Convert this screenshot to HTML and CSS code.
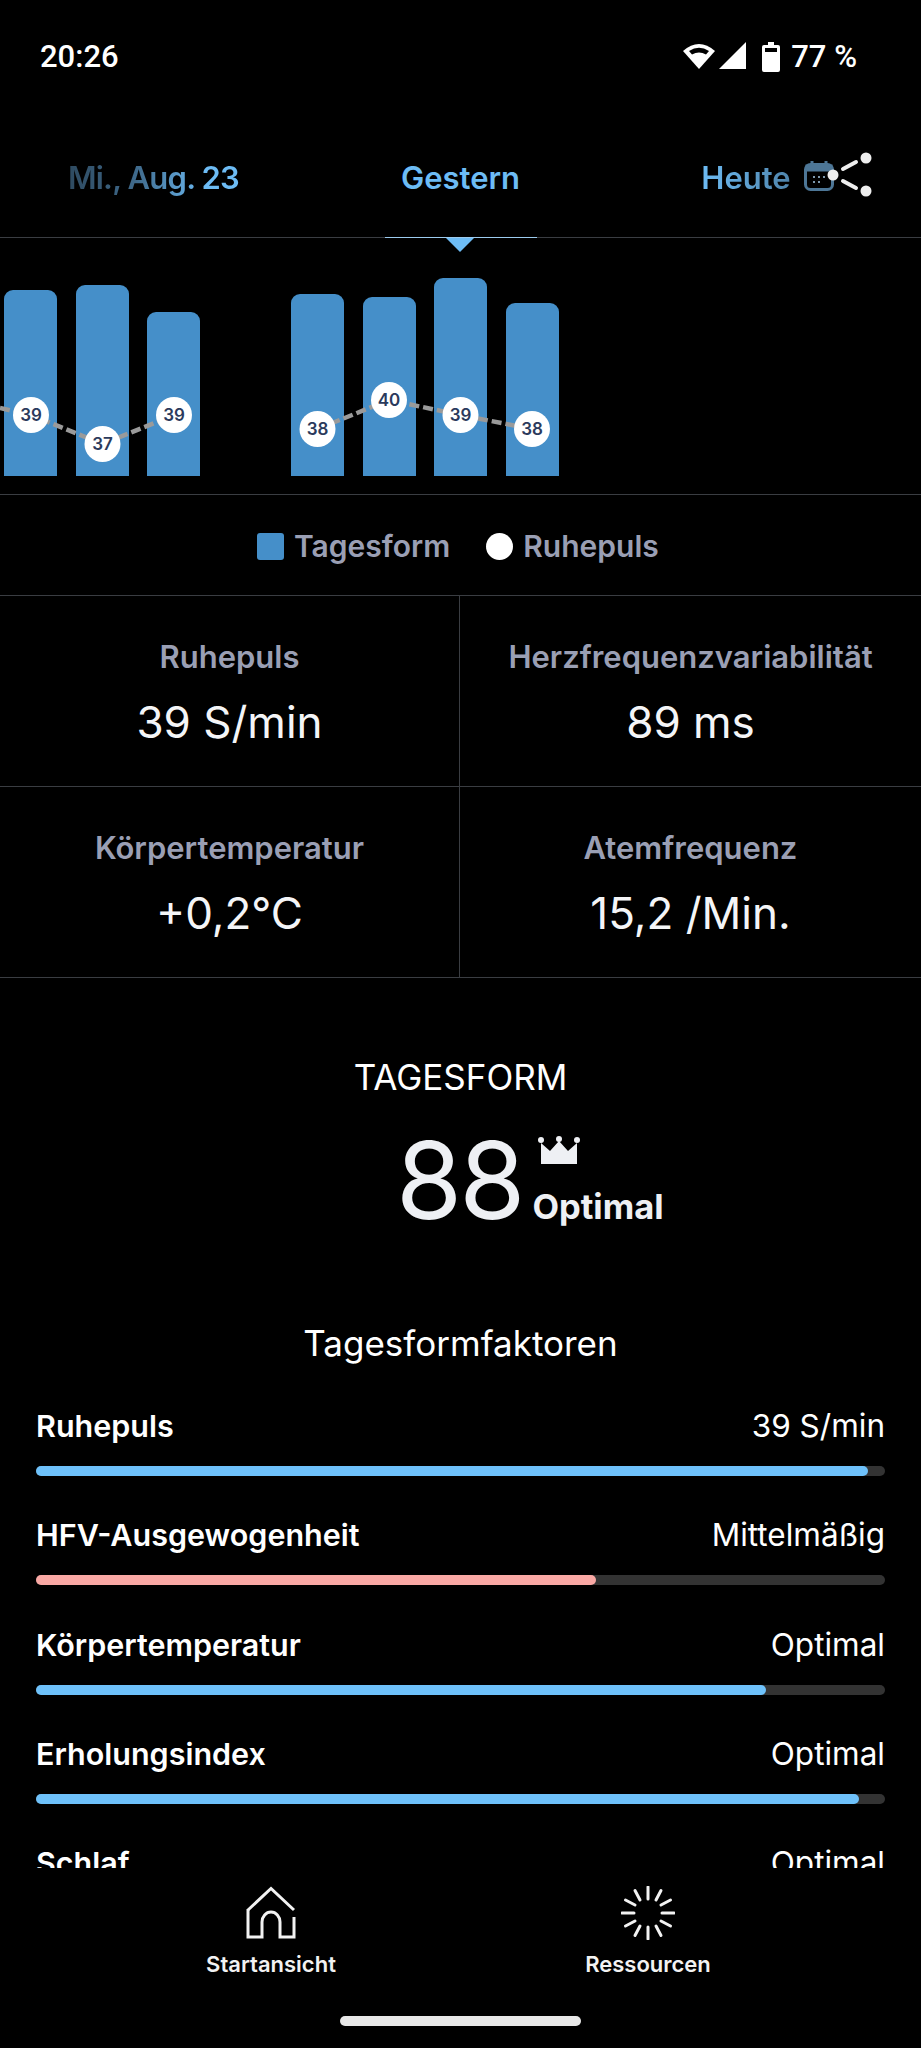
FILE: index.html
```html
<!DOCTYPE html>
<html lang="de">
<head>
    <meta charset="UTF-8">
    <title>Tagesform</title>
    <link rel="stylesheet" href="styles.css">
</head>
<body>
<div id="app">
    <div class="status">
        <span class="status_time">20:26</span>
        <div class="status_right">
            <svg class="ic_wifi" width="34" height="28" viewBox="0 0 34 28">
                <path d="M17 27 L1 9 Q17 -5 33 9 Z" fill="#fff"/>
                <path d="M7 9 Q17 2.500 27 9 L24 12.500 Q17 8.500 10 12.500 Z" fill="#000"/>
            </svg>
            <svg class="ic_signal" width="27" height="28" viewBox="0 0 27 28">
                <path d="M27 0 V27 H0 Z" fill="#fff"/>
            </svg>
            <svg class="ic_batt" width="18" height="30" viewBox="0 0 18 30">
                <path d="M6 0 H12 V3 H16 Q18 3 18 5 V28 Q18 30 16 30 H2 Q0 30 0 28 V5 Q0 3 2 3 H6 Z" fill="#fff"/>
                <rect x="3" y="6" width="12" height="4" fill="#000"/>
            </svg>
            <span class="status_pct">77 %</span>
        </div>
    </div>

    <div class="tabs">
        <div class="tab tab_past"><span class="fade_left">Mi., Aug. 23</span></div>
        <div class="tab">Gestern</div>
        <div class="tab tab_today">
            <span class="fade_right">Heute</span>
            <svg width="30" height="30" viewBox="0 0 30 30">
                <path d="M8 0 V4 M22 0 V4" stroke="#4d7696" stroke-width="3"/>
                <rect x="1.500" y="3.500" width="27" height="25" rx="5" fill="none" stroke="#4d7696" stroke-width="3"/>
                <rect x="1.500" y="3.500" width="27" height="7" fill="#4d7696"/>
                <path d="M9 16 H11 M14 16 H16 M19 16 H21 M9 21 H11 M14 21 H16" stroke="#7d98ad" stroke-width="2"/>
            </svg>
        </div>
        <svg class="share" width="46" height="46" viewBox="0 0 46 46">
            <circle cx="6" cy="23" r="5.500" fill="#eee"/>
            <circle cx="39" cy="6" r="5.500" fill="#eee"/>
            <circle cx="39" cy="39" r="5.500" fill="#eee"/>
            <path d="M16 17 L29 10 M16 29 L29 36" stroke="#eee" stroke-width="4" stroke-linecap="round"/>
        </svg>
        <span class="tab_line"></span>
        <span class="tab_arrow"></span>
    </div>

    <div class="chart">
        <div class="bars">
            <div class="bar" style="height: 186px"></div>
            <div class="bar" style="height: 191px"></div>
            <div class="bar" style="height: 164px"></div>
            <div class="bar bar_gap" style="height: 182px"></div>
            <div class="bar" style="height: 179px"></div>
            <div class="bar" style="height: 198px"></div>
            <div class="bar" style="height: 173px"></div>
        </div>
        <svg class="pulse" width="921" height="256" viewBox="0 0 921 256">
            <path class="pulse_line" d="M0 170 L31 177 L102.500 206 L174 177"/>
            <path class="pulse_line" d="M317.500 191 L389 162 L460.500 177 L532 191"/>
            <g class="pulse_dot"><circle cx="31" cy="177" r="18"/><text x="31" y="183">39</text></g>
            <g class="pulse_dot"><circle cx="102.500" cy="206" r="18"/><text x="102.500" y="212">37</text></g>
            <g class="pulse_dot"><circle cx="174" cy="177" r="18"/><text x="174" y="183">39</text></g>
            <g class="pulse_dot"><circle cx="317.500" cy="191" r="18"/><text x="317.500" y="197">38</text></g>
            <g class="pulse_dot"><circle cx="389" cy="162" r="18"/><text x="389" y="168">40</text></g>
            <g class="pulse_dot"><circle cx="460.500" cy="177" r="18"/><text x="460.500" y="183">39</text></g>
            <g class="pulse_dot"><circle cx="532" cy="191" r="18"/><text x="532" y="197">38</text></g>
        </svg>
    </div>

    <div class="legend">
        <span class="legend_sq"></span><span class="legend_txt">Tagesform</span>
        <span class="legend_dot"></span><span class="legend_txt">Ruhepuls</span>
    </div>

    <div class="stats">
        <div class="stat"><div class="stat_label">Ruhepuls</div><div class="stat_value">39 S/min</div></div>
        <div class="stat"><div class="stat_label">Herzfrequenzvariabilität</div><div class="stat_value">89 ms</div></div>
        <div class="stat"><div class="stat_label">Körpertemperatur</div><div class="stat_value">+0,2°C</div></div>
        <div class="stat"><div class="stat_label">Atemfrequenz</div><div class="stat_value">15,2 /Min.</div></div>
    </div>

    <div class="scroll">
        <h2 class="score_title">TAGESFORM</h2>
        <div class="score">
            <span class="score_num">88</span>
            <div class="score_side">
                <svg width="42" height="30" viewBox="0 0 42 30">
                    <path d="M3 7 L12 15 L21 5 L30 15 L39 7 V28 H3 Z" fill="#eef0f4"/>
                    <circle cx="3" cy="4" r="3" fill="#eef0f4"/>
                    <circle cx="21" cy="3" r="3" fill="#eef0f4"/>
                    <circle cx="39" cy="4" r="3" fill="#eef0f4"/>
                </svg>
                <span class="score_word">Optimal</span>
            </div>
        </div>

        <h3 class="factors_title">Tagesformfaktoren</h3>

        <div class="factor">
            <div class="factor_head"><b>Ruhepuls</b><span>39 S/min</span></div>
            <div class="track"><div class="fill" style="width: 832px"></div></div>
        </div>
        <div class="factor">
            <div class="factor_head"><b>HFV-Ausgewogenheit</b><span>Mittelmäßig</span></div>
            <div class="track"><div class="fill fill_warn" style="width: 560px"></div></div>
        </div>
        <div class="factor">
            <div class="factor_head"><b>Körpertemperatur</b><span>Optimal</span></div>
            <div class="track"><div class="fill" style="width: 730px"></div></div>
        </div>
        <div class="factor">
            <div class="factor_head"><b>Erholungsindex</b><span>Optimal</span></div>
            <div class="track"><div class="fill" style="width: 823px"></div></div>
        </div>
        <div class="factor">
            <div class="factor_head"><b>Schlaf</b><span>Optimal</span></div>
            <div class="track"><div class="fill" style="width: 800px"></div></div>
        </div>
    </div>

    <div class="nav">
        <div class="nav_item">
            <svg width="50" height="54" viewBox="0 -1 50 54">
                <path d="M2 23 L25 1.500 L48 23" fill="none" stroke="#f2f2f2" stroke-width="3"/>
                <path d="M2 22 V50 H16 V35 A9 10 0 0 1 34 35 V50 H48 V30" fill="none" stroke="#f2f2f2" stroke-width="3"/>
            </svg>
            <span>Startansicht</span>
        </div>
        <div class="nav_item">
            <svg width="54" height="54" viewBox="0 0 54 54">
                <g stroke="#f2f2f2" stroke-width="3" stroke-linecap="round">
                    <path d="M27 1 V13"/>
                    <path d="M27 41 V53"/>
                    <path d="M1 27 H13"/>
                    <path d="M41 27 H53"/>
                    <path d="M14 4.500 L19 14"/>
                    <path d="M40 4.500 L35 14"/>
                    <path d="M14 49.500 L19 40"/>
                    <path d="M40 49.500 L35 40"/>
                    <path d="M4.500 14 L14 19"/>
                    <path d="M49.500 14 L40 19"/>
                    <path d="M4.500 40 L14 35"/>
                    <path d="M49.500 40 L40 35"/>
                </g>
            </svg>
            <span>Ressourcen</span>
        </div>
    </div>
    <div class="home_bar"></div>
</div>
</body>
</html>
```

FILE: styles.css
```css
* {
    margin: 0;
    padding: 0;
    box-sizing: border-box;
}

html, body {
    background: #000;
}

#app {
    width: 921px;
    height: 2048px;
    overflow: hidden;
    display: flex;
    flex-direction: column;
    position: relative;
    background: #000;
    color: #fff;
    font-family: "Inter", "Liberation Sans", sans-serif;
}

/* status bar */
.status {
    height: 100px;
    flex: none;
    display: flex;
    justify-content: space-between;
    align-items: flex-start;
    padding: 42px 64px 0 40px;
}

.status_time {
    font-family: "Roboto", sans-serif;
    font-size: 31px;
    line-height: 30px;
    font-weight: 500;
}

.status_right {
    display: flex;
    align-items: flex-start;
}

.ic_signal {
    margin-left: 3px;
}

.ic_batt {
    margin-left: 16px;
}

.status_pct {
    font-family: "Roboto", sans-serif;
    font-size: 31px;
    line-height: 30px;
    font-weight: 500;
    margin-left: 11px;
}

/* day tabs */
.tabs {
    height: 138px;
    flex: none;
    display: grid;
    grid-template-columns: 307px 307px 307px;
    align-items: center;
    padding-top: 18px;
    border-bottom: 1px solid #3a3d42;
    position: relative;
    font-size: 31px;
    font-weight: 600;
    color: #6dbcf5;
}

.tab {
    text-align: center;
}

.fade_left {
    letter-spacing: -0.8px;
    background: linear-gradient(90deg, #2e4a60 0%, #3f6a8c 40%, #6dbcf5 80%);
    -webkit-background-clip: text;
    background-clip: text;
    color: transparent;
}

.fade_right {
    background: linear-gradient(90deg, #6dbcf5 0%, #4f84ab 100%);
    -webkit-background-clip: text;
    background-clip: text;
    color: transparent;
}

.tab_today {
    display: flex;
    justify-content: center;
    align-items: center;
    gap: 13px;
}

.tab_today svg {
    margin-top: -4px;
}

.share {
    position: absolute;
    left: 827px;
    top: 52px;
}

.tab_line {
    position: absolute;
    left: 385px;
    bottom: -1px;
    width: 152px;
    height: 1px;
    background: #9ccbee;
}

.tab_arrow {
    position: absolute;
    left: 446px;
    bottom: -15px;
    width: 0;
    height: 0;
    border-left: 14px solid transparent;
    border-right: 14px solid transparent;
    border-top: 14px solid #6dbcf5;
}

/* chart */
.chart {
    height: 257px;
    flex: none;
    position: relative;
    border-bottom: 1px solid #3a3d42;
}

.bars {
    height: 238px;
    display: flex;
    align-items: flex-end;
    gap: 18.670px;
    padding-left: 4px;
}

.bar {
    width: 53px;
    background: #458fc9;
    border-radius: 9px 9px 0 0;
}

.bar_gap {
    margin-left: 72px;
}

.pulse {
    position: absolute;
    left: 0;
    top: 0;
}

.pulse_line {
    fill: none;
    stroke: #9a9a9a;
    stroke-width: 4.500;
    stroke-dasharray: 10 4;
}

.pulse_dot circle {
    fill: #fff;
}

.pulse_dot text {
    fill: #2b3a5c;
    font-size: 17px;
    font-weight: 600;
    text-anchor: middle;
}

/* legend */
.legend {
    height: 101px;
    flex: none;
    display: flex;
    align-items: center;
    padding: 2px 0 0 257px;
    border-bottom: 1px solid #3a3d42;
    font-size: 30px;
    font-weight: 600;
    color: #9a9fb4;
}

.legend_sq {
    width: 27px;
    height: 27px;
    border-radius: 3px;
    background: #458fc9;
    margin-right: 10px;
}

.legend_dot {
    width: 27px;
    height: 27px;
    border-radius: 50%;
    background: #fff;
    margin: 0 10px 0 36px;
}

/* four stat cells */
.stats {
    flex: none;
    display: grid;
    grid-template-columns: 460px 461px;
    grid-auto-rows: 191px;
}

.stat {
    border-bottom: 1px solid #3a3d42;
    display: flex;
    flex-direction: column;
    align-items: center;
    padding-top: 43px;
}

.stat:nth-child(odd) {
    border-right: 1px solid #3a3d42;
}

.stat_label {
    font-size: 31px;
    line-height: 36px;
    font-weight: 600;
    color: #9a9fb4;
}

.stat_value {
    margin-top: 19px;
    font-size: 44px;
    line-height: 56px;
    font-weight: 400;
    color: #f4f5f7;
}

/* scrolling part */
.scroll {
    height: 890px;
    flex: none;
    overflow: hidden;
}

.score_title {
    margin-top: 79px;
    text-align: center;
    font-size: 35px;
    line-height: 40px;
    font-weight: 400;
}

.score {
    display: flex;
    align-items: flex-start;
    padding-left: 396px;
    margin-top: 23px;
    color: #eef0f4;
}

.score_num {
    font-size: 107px;
    line-height: 120px;
    font-weight: 400;
    letter-spacing: -3px;
}

.score_side {
    display: flex;
    flex-direction: column;
    align-items: flex-start;
    margin-left: 10px;
    padding-top: 16px;
}

.score_side svg {
    margin-left: 6px;
}

.score_word {
    margin-top: 21px;
    font-size: 34.500px;
    line-height: 40px;
    font-weight: 700;
}

.factors_title {
    margin-top: 81px;
    text-align: center;
    font-size: 35px;
    line-height: 44px;
    font-weight: 400;
}

.factor {
    padding: 0 36px;
    height: 109.300px;
}

.factor_head {
    display: flex;
    justify-content: space-between;
    line-height: 36px;
}

.factor_head b {
    font-size: 30.500px;
    font-weight: 600;
}

.factor_head span {
    font-size: 31.500px;
    font-weight: 400;
}

.factors_title + .factor {
    margin-top: 43px;
}

.track {
    margin-top: 22px;
    height: 10px;
    border-radius: 5px;
    background: #333;
}

.fill {
    height: 10px;
    border-radius: 5px;
    background: #6ec1fa;
}

.fill_warn {
    background: #f9a8a4;
}

/* bottom nav */
.nav {
    flex: none;
    display: grid;
    grid-template-columns: 542px 212px;
    padding-top: 18px;
}

.nav_item {
    display: flex;
    flex-direction: column;
    align-items: center;
    font-size: 22px;
    line-height: 28px;
    font-weight: 600;
    color: #f2f2f2;
}

.nav_item span {
    margin-top: 10px;
}

.home_bar {
    position: absolute;
    left: 340px;
    top: 2016px;
    width: 241px;
    height: 10px;
    border-radius: 5px;
    background: #e8e8e8;
}
```
